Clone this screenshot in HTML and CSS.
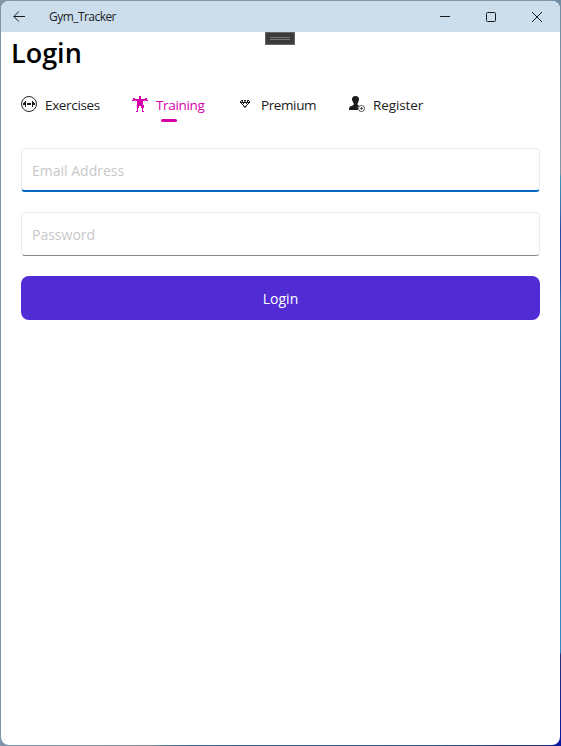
FILE: index.html
```html
<!DOCTYPE html>
<html lang="en">
<head>
<meta charset="utf-8">
<title>Gym_Tracker</title>
<link rel="stylesheet" href="styles.css">
</head>
<body>
<div class="window">
  <header class="titlebar">
    <svg class="back" width="12" height="12" viewBox="0 0 12 12"><path d="M12 5.500H.8M5.800 .5.800 5.500l5 5"/></svg>
    <span class="app-name">Gym_Tracker</span>
    <div class="controls">
      <svg width="10" height="10" viewBox="0 0 10 10"><path d="M0 4.500h10"/></svg>
      <svg width="10" height="10" viewBox="0 0 10 10"><rect x=".5" y=".5" width="9" height="9" rx="1"/></svg>
      <svg width="10" height="10" viewBox="0 0 10 10"><path d="M0 0l10 10M10 0L0 10"/></svg>
    </div>
  </header>
  <div class="debug-handle"></div>
  <h1>Login</h1>
  <nav class="tabs">
    <a class="tab exercises">
      <svg width="16" height="16" viewBox="0 0 16 16"><circle cx="8" cy="8" r="7.500" fill="none" stroke="currentColor" stroke-width=".95"/><path d="M4 5h1v6H4V9H3V8.900H2V7h1V6h1zM12 5h-1v6h1V9h1V8.900h1V7h-1V6h-1zM6 7h4v2H6z"/></svg>
      <span>Exercises</span>
    </a>
    <a class="tab training active">
      <svg width="16" height="16" viewBox="0 0 16 16"><path d="M7 0h2v3h4V2h2v2h1v1h-2v-.2h-2V5h-1v4h1v3h-1v3h1v1h-2v-4H9v-2H7v2H6v4H4v-1h1v-3H4.800V9H5V5H4v-.2H2V5H0V4h1V2h2v1h4z"/></svg>
      <span>Training</span>
    </a>
    <a class="tab premium">
      <svg width="16" height="16" viewBox="0 0 16 16"><path d="M4 4h2v1H4zM7 4h2v1H7zM10 4h2v1h-2zM3 5h1v1H3zM5 5h1v1H5zM7.500 5h1v1h-1zM10 5h1v1h-1zM12 5h1v1h-1zM3 6h10v1H3zM4 7h1v1H4zM6 7h1v1H6zM9 7h1v1H9zM11 7h1v1h-1zM5 8h1v1H5zM10 8h1v1h-1zM6 9h1v1H6zM9 9h1v1H9zM6.500 10h3v1h-1v1h-1v-1h-1z"/></svg>
      <span>Premium</span>
    </a>
    <a class="tab register">
      <svg width="16" height="16" viewBox="0 0 16 16"><path d="M6.500 0C8.600 0 10 1.200 10 3.200c0 1-.1 1.700-.6 2.300-.2 1.500-1 2-1 2.600 0 .8.500 1 1.600 1.400-1.500 1.500-1.500 3.200-.8 4.500H0c0-2.300.3-3.200 1.700-3.700C3.900 9.500 4.800 9.300 4.800 8c0-.6-.8-1-1-2.500C3.200 5 3 4 3 3.200 3 1.200 4.400 0 6.500 0z"/><circle cx="12.500" cy="12.500" r="3.100" fill="#fff" stroke="currentColor" stroke-width=".7"/><path d="M10.800 12.500h3.400M12.500 10.800v3.400" fill="none" stroke="currentColor" stroke-width=".7"/></svg>
      <span>Register</span>
    </a>
  </nav>
  <form class="login-form">
    <div class="field focused">Email Address</div>
    <div class="field">Password</div>
    <button type="button">Login</button>
  </form>
</div>
</body>
</html>
```
FILE: styles.css
```css
* { box-sizing: border-box; }
html, body { margin: 0; height: 100%; }
body {
  padding: 1px;
  background:
    linear-gradient(90deg, #7994ae 0, #798995 150px, #326ba0 190px, #275b98 430px, #202d78 540px, #0717a0) bottom / 100% 1px no-repeat,
    linear-gradient(180deg, #718da2 0, #8396a3 174px, #3996b6 177px, #3b75b0 207px, #2449a5 230px, #2b4da9 276px, #397eb1 310px, #315da8 390px, #2855a5 450px, #3b87bd 540px, #3187c4 652px, #263177 655px, #0717a0 740px) right / 10px 100% no-repeat,
    #8095a8;
  overflow: hidden;
  font-family: "Open Sans", sans-serif;
}
.window {
  position: relative;
  width: 559px;
  height: 744px;
  background: #fff;
  border-radius: 8px;
  overflow: hidden;
}
.titlebar {
  display: flex;
  align-items: center;
  height: 31px;
  padding-left: 12px;
  background: #ccdeeb;
  color: #1b2227;
}
.titlebar svg { fill: none; stroke: #161b1f; stroke-width: 1; }
.app-name {
  margin-left: 24px;
  font: 12px/16px "Open Sans", sans-serif;
  letter-spacing: -.55px;
}
.controls { display: flex; gap: 36px; margin-left: auto; padding-right: 18px; }
.debug-handle {
  position: absolute;
  left: 264px;
  top: 31px;
  width: 30px;
  height: 13px;
  background: linear-gradient(#777, #777) 4px 4px / 20px 1px no-repeat,
    linear-gradient(#777, #777) 4px 6px / 20px 1px no-repeat, #3b3b3b;
  border: 1px solid #666;
}
h1 {
  margin: 0;
  padding: 2px 0 0 10px;
  height: 51px;
  font: 600 27px/38px "Open Sans", sans-serif;
  color: #000;
}
.tabs { display: flex; height: 46px; padding-left: 20px; color: #1b1b1b; }
.tab {
  position: relative;
  display: flex;
  align-items: center;
  gap: 8px;
  height: 42px;
  font-size: 13.5px;
  line-height: 20px;
  white-space: nowrap;
}
.tab svg { fill: currentColor; flex: none; }
.tab span { margin-top: 2px; }
.exercises { width: 111px; letter-spacing: -.35px; }
.training { width: 105px; letter-spacing: -.35px; }
.premium { width: 112px; letter-spacing: -.4px; }
.register { letter-spacing: -.1px; }
.active { color: #d600aa; }
.active::after {
  content: "";
  position: absolute;
  left: 29px;
  bottom: 3px;
  width: 16px;
  height: 3px;
  border-radius: 2px;
  background: #d600aa;
}
.login-form { display: grid; gap: 20px; padding: 19px 20px 0; }
.field {
  height: 44px;
  padding: 0 10px;
  border: 1px solid #ececec;
  border-bottom-color: #868686;
  border-radius: 4px;
  font-size: 14px;
  line-height: 43px;
  color: #c8c8c8;
}
.focused { border-bottom: 2px solid #0067c0; }
button {
  height: 44px;
  padding: 2px 0 0;
  border: 0;
  border-radius: 8px;
  background: #512bd4;
  color: #fff;
  font: 14px/20px "Open Sans", sans-serif;
}
```
